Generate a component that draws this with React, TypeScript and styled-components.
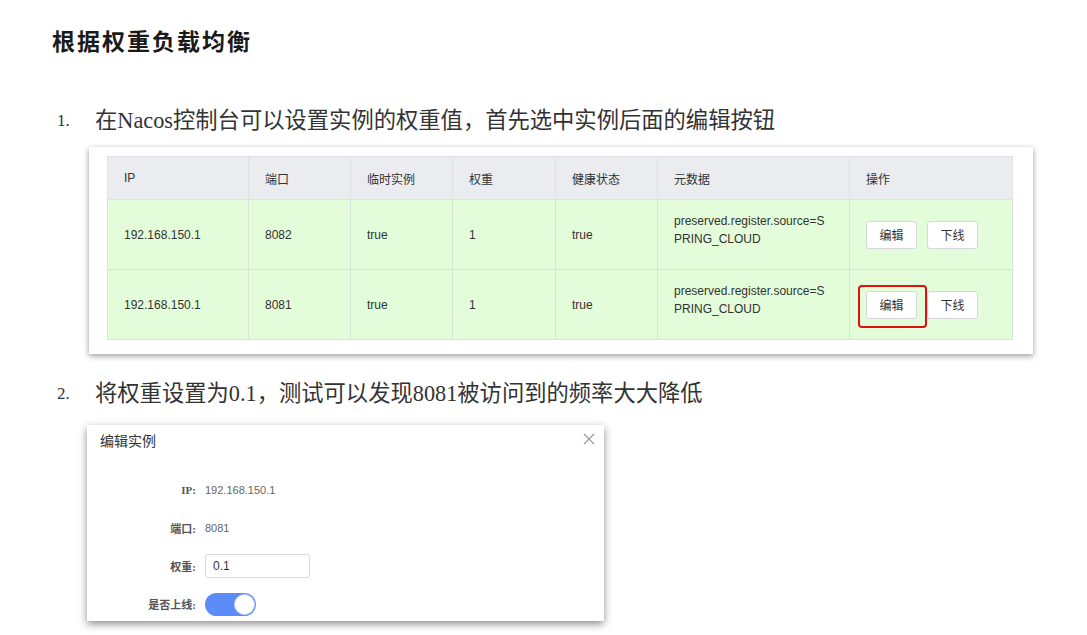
import * as React from 'react';
import styled, { createGlobalStyle } from 'styled-components';

const GlobalStyle = createGlobalStyle`
    html, body {
        margin: 0;
        padding: 0;
        background: #fff;
    }
`;

const serif = `"Liberation Serif", "Noto Sans CJK SC", serif`;
const sans = `"Liberation Sans", "Noto Sans CJK SC", sans-serif`;

const rows = [
    { ip: '192.168.150.1', port: '8082', ephemeral: 'true', weight: '1', healthy: 'true', meta: 'preserved.register.source=SPRING_CLOUD', marked: false },
    { ip: '192.168.150.1', port: '8081', ephemeral: 'true', weight: '1', healthy: 'true', meta: 'preserved.register.source=SPRING_CLOUD', marked: true },
];

const columns = [
    { title: 'IP', width: 141 },
    { title: '端口', width: 102 },
    { title: '临时实例', width: 102 },
    { title: '权重', width: 103 },
    { title: '健康状态', width: 102 },
    { title: '元数据', width: 192 },
    { title: '操作', width: 163 },
];

export default function App() {
    return (
        <Page>
            <GlobalStyle />
            <Title>根据权重负载均衡</Title>

            <Item $top={48}>
                <Marker>1.</Marker>
                <span>在Nacos控制台可以设置实例的权重值，首先选中实例后面的编辑按钮</span>
            </Item>

            <TableShot>
                <Table>
                    <colgroup>
                        {columns.map((c) => (
                            <col key={c.title} style={{ width: c.width }} />
                        ))}
                    </colgroup>
                    <thead>
                        <tr>
                            {columns.map((c) => (
                                <Th key={c.title}>{c.title}</Th>
                            ))}
                        </tr>
                    </thead>
                    <tbody>
                        {rows.map((r) => (
                            <tr key={r.port}>
                                <Td>{r.ip}</Td>
                                <Td>{r.port}</Td>
                                <Td>{r.ephemeral}</Td>
                                <Td>{r.weight}</Td>
                                <Td>{r.healthy}</Td>
                                <MetaTd>{r.meta}</MetaTd>
                                <Td>
                                    <Actions>
                                        <ActionButton $marked={r.marked}>编辑</ActionButton>
                                        <ActionButton>下线</ActionButton>
                                    </Actions>
                                </Td>
                            </tr>
                        ))}
                    </tbody>
                </Table>
            </TableShot>

            <Item $top={25}>
                <Marker>2.</Marker>
                <span>将权重设置为0.1，测试可以发现8081被访问到的频率大大降低</span>
            </Item>

            <Dialog>
                <DialogHeader>
                    编辑实例
                    <Close aria-label="close">
                        <svg width="12" height="12" viewBox="0 0 12 12">
                            <path d="M1 1 L11 11 M11 1 L1 11" stroke="#999" strokeWidth="1.2" fill="none" />
                        </svg>
                    </Close>
                </DialogHeader>
                <Form>
                    <Label>IP:</Label>
                    <Value>192.168.150.1</Value>
                    <Label>端口:</Label>
                    <Value>8081</Value>
                    <Label>权重:</Label>
                    <Value>
                        <Input defaultValue="0.1" />
                    </Value>
                    <Label>是否上线:</Label>
                    <Value>
                        <Switch $on />
                    </Value>
                </Form>
            </Dialog>
        </Page>
    );
}

const Page = styled.div`
    display: flex;
    flex-direction: column;
    align-items: flex-start;
    padding: 28px 0 0 52px;
    width: 1087px;
    height: 635px;
    box-sizing: border-box;
    overflow: hidden;
`;

const Title = styled.h2`
    margin: 0;
    font-family: ${serif};
    font-size: 23px;
    font-weight: bold;
    letter-spacing: 2px;
    line-height: 30px;
    color: #1a1a1a;
`;

const Item = styled.div<{ $top: number }>`
    display: flex;
    margin-top: ${(p) => p.$top}px;
    padding-left: 5px;
    font-family: ${serif};
    font-size: 22.3px;
    line-height: 30px;
    color: #333;
`;

const Marker = styled.span`
    width: 38px;
    flex: none;
    font-size: 17px;
`;

const TableShot = styled.div`
    margin: 11px 0 0 37px;
    padding: 9px 21px 14px 18px;
    width: 944px;
    box-sizing: border-box;
    background: #fff;
    box-shadow: 0 2px 6px rgba(0, 0, 0, 0.4);
`;

const Table = styled.table`
    width: 905px;
    border-collapse: collapse;
    table-layout: fixed;
    font-family: ${sans};
    font-size: 12px;
    color: #333;
`;

const Th = styled.th`
    height: 42px;
    padding: 0 16px;
    text-align: left;
    font-weight: normal;
    background: #ebecf0;
    border: 1px solid #dfe0e4;
`;

const Td = styled.td`
    height: 69px;
    padding: 0 16px;
    background: #e3fcd9;
    border: 1px solid #d9e4d6;
    vertical-align: middle;
`;

const MetaTd = styled(Td)`
    height: 61px;
    padding-right: 20px;
    padding-bottom: 8px;
    word-break: break-all;
    line-height: 17.5px;
`;

const Actions = styled.div`
    display: flex;
    gap: 10px;
`;

const ActionButton = styled.button<{ $marked?: boolean }>`
    position: relative;
    width: 51px;
    height: 28px;
    padding: 0;
    background: #fff;
    border: 1px solid #d5d7dc;
    border-radius: 3px;
    font-family: ${sans};
    font-size: 12px;
    color: #333;

    ${(p) =>
        p.$marked &&
        `
        &::after {
            content: '';
            position: absolute;
            left: -9px;
            top: -7px;
            right: -11px;
            bottom: -10px;
            border: 2px solid #e01010;
            border-radius: 4px;
        }
    `}
`;

const Dialog = styled.div`
    margin: 16px 0 0 35px;
    width: 517px;
    height: 196px;
    overflow: hidden;
    background: #fff;
    box-shadow: 0 3px 8px rgba(0, 0, 0, 0.45);
    font-family: ${sans};
`;

const DialogHeader = styled.div`
    position: relative;
    height: 32px;
    padding-left: 13px;
    line-height: 32px;
    font-size: 14px;
    color: #333;
`;

const Close = styled.span`
    position: absolute;
    right: 9px;
    top: 8px;
    display: flex;
`;

const Form = styled.div`
    display: grid;
    grid-template-columns: 109px 1fr;
    grid-auto-rows: 38px;
    column-gap: 9px;
    margin-top: 14px;
    align-items: center;
`;

const Label = styled.div`
    text-align: right;
    font-family: ${serif};
    font-size: 11px;
    font-weight: bold;
    color: #555;
`;

const Value = styled.div`
    display: flex;
    align-items: center;
    font-size: 11px;
    color: #666;
`;

const Input = styled.input`
    width: 105px;
    height: 24px;
    box-sizing: border-box;
    padding: 0 7px;
    border: 1px solid #d9dbe0;
    border-radius: 3px;
    font-family: ${sans};
    font-size: 12px;
    color: #333;
    outline: none;
`;

const Switch = styled.span<{ $on?: boolean }>`
    position: relative;
    display: inline-block;
    width: 51px;
    height: 23px;
    border-radius: 12px;
    background: ${(p) => (p.$on ? '#5b8cf8' : '#ccc')};

    &::after {
        content: '';
        position: absolute;
        top: 1px;
        ${(p) => (p.$on ? 'right: 1px;' : 'left: 1px;')}
        width: 21px;
        height: 21px;
        box-sizing: border-box;
        border-radius: 50%;
        background: #fff;
        border: 1px solid #c9d8fb;
    }
`;
